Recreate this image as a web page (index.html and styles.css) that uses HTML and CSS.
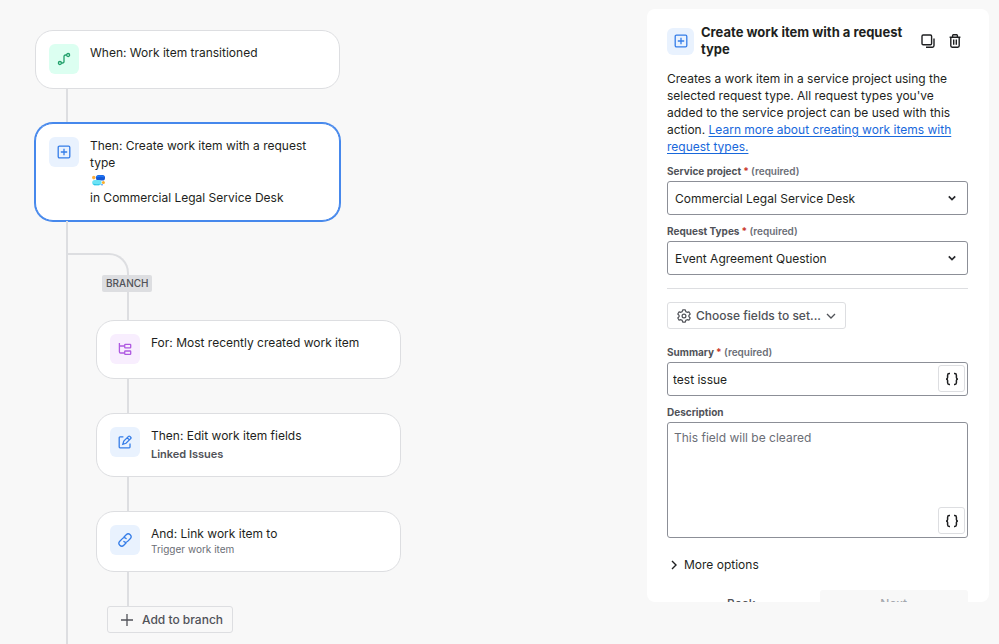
FILE: index.html
```html
<!DOCTYPE html>
<html lang="en">
<head>
  <meta charset="UTF-8">
  <meta name="viewport" content="width=device-width, initial-scale=1">
  <title>Automation rule</title>
  <link rel="stylesheet" href="styles.css">
</head>
<body>
  <main class="builder">
    <section class="flow" aria-label="Rule flow">
      <article class="card">
        <span class="tile green">
          <svg width="14" height="14" viewBox="0 0 14 14" fill="none" stroke="currentColor" stroke-width="1.3">
            <circle cx="2.9" cy="11" r="1.5"/>
            <circle cx="11.1" cy="3" r="1.5"/>
            <path d="M4.4 11H5.5Q7 11 7 9.5V4.5Q7 3 8.5 3H9.6"/>
          </svg>
        </span>
        <div class="card-text">
          <p class="card-title">When: Work item transitioned</p>
        </div>
      </article>
      <div class="connector"></div>
      <article class="card selected">
        <span class="tile blue">
          <svg width="14" height="14" viewBox="0 0 14 14" fill="none" stroke="currentColor" stroke-width="1.3">
            <rect x="1.2" y="1.2" width="11.6" height="11.6" rx="1.2"/>
            <path d="M7 3.8V10.2M3.8 7H10.2"/>
          </svg>
        </span>
        <div class="card-text">
          <p class="card-title">Then: Create work item with a request type</p>
          <div class="project-logo">
            <svg width="16" height="12" viewBox="0 0 16 12">
              <rect x="6" y="1" width="9" height="5.6" rx="2.6" fill="#1558d6"/>
              <path d="M7 2Q10 .4 13.6 1.8L14 3.4Q10 2 6.4 3.6Z" fill="#1d7afc"/>
              <rect x="2.2" y="6" width="9.4" height="5.2" rx="2.6" fill="#6be3f5"/>
              <path d="M3 9.6Q6 11 10 9.8L9 11.2H4Z" fill="#2ec4e6"/>
              <circle cx="3.8" cy="3.6" r="1.8" fill="#fbb040"/>
              <circle cx="13.4" cy="8.4" r="1.5" fill="#f9ae2b"/>
              <circle cx="12" cy="10.8" r=".8" fill="#2f7df0"/>
            </svg>
          </div>
          <p class="card-title">in Commercial Legal Service Desk</p>
        </div>
      </article>

      <div class="trunk">
        <div class="curve"></div>
        <div class="branch">
          <span class="branch-label">BRANCH</span>
          <div class="connector short"></div>
          <article class="card">
            <span class="tile purple">
              <svg width="14" height="14" viewBox="0 0 14 14" fill="none" stroke="currentColor" stroke-width="1.3">
                <path d="M1.4 1V9.8Q1.4 11 2.6 11H6.6M1.4 4H6.6"/>
                <rect x="6.7" y="2.4" width="6" height="3.4" rx=".6"/>
                <rect x="6.7" y="9" width="6" height="3.4" rx=".6"/>
              </svg>
            </span>
            <div class="card-text">
              <p class="card-title">For: Most recently created work item</p>
            </div>
          </article>
          <div class="connector"></div>
          <article class="card">
            <span class="tile blue">
              <svg width="14" height="14" viewBox="0 0 14 14" fill="none" stroke="currentColor" stroke-width="1.3">
                <path d="M5.4 1.9H2Q1.2 1.9 1.2 2.7V12Q1.2 12.8 2 12.8H11.2Q12 12.8 12 12V8.6"/>
                <path d="M10.5 1.4Q11.2.7 11.9 1.4L12.7 2.2Q13.4 2.9 12.7 3.6L8 8.3L4.8 9.3L5.8 6.1ZM9.2 2.7L11.4 4.9"/>
              </svg>
            </span>
            <div class="card-text">
              <p class="card-title">Then: Edit work item fields</p>
              <p class="card-sub strong">Linked Issues</p>
            </div>
          </article>
          <div class="connector"></div>
          <article class="card">
            <span class="tile blue">
              <svg width="14" height="14" viewBox="0 0 14 14" fill="none" stroke="currentColor" stroke-width="1.3" stroke-linecap="round">
                <path d="M6 4L8.2 1.8A2.75 2.75 0 0 1 12.2 5.8L9.6 8.4A2.7 2.7 0 0 1 5.9 8.5"/>
                <path d="M8 10L5.8 12.2A2.75 2.75 0 0 1 1.8 8.2L4.4 5.6A2.7 2.7 0 0 1 8.1 5.5"/>
              </svg>
            </span>
            <div class="card-text">
              <p class="card-title">And: Link work item to</p>
              <p class="card-sub">Trigger work item</p>
            </div>
          </article>
          <div class="connector"></div>
          <button class="btn add" type="button">
            <svg width="14" height="14" viewBox="0 0 14 14" fill="none" stroke="currentColor" stroke-width="1.3">
              <path d="M7 1V13M1 7H13"/>
            </svg>
            Add to branch
          </button>
        </div>
      </div>
    </section>

    <aside class="panel">
      <header class="panel-header">
        <span class="tile blue small">
          <svg width="14" height="14" viewBox="0 0 14 14" fill="none" stroke="currentColor" stroke-width="1.3">
            <rect x="1.2" y="1.2" width="11.6" height="11.6" rx="1.2"/>
            <path d="M7 3.8V10.2M3.8 7H10.2"/>
          </svg>
        </span>
        <h1>Create work item with a request type</h1>
        <button class="icon-btn" type="button" aria-label="Duplicate">
          <svg width="14" height="14" viewBox="0 0 14 14" fill="none" stroke="currentColor" stroke-width="1.4">
            <rect x="1" y="1" width="9.6" height="9.8" rx="1.2"/>
            <path d="M13 4.4V11.6Q13 13.2 11.4 13.2H5"/>
          </svg>
        </button>
        <button class="icon-btn" type="button" aria-label="Delete">
          <svg width="14" height="14" viewBox="0 0 14 14" fill="none" stroke="currentColor" stroke-width="1.4">
            <path d="M1.6 3.2H12.4M4.6 3V1.6Q4.6.8 5.4.8H8.6Q9.4.8 9.4 1.6V3M2.8 3.2V11.8Q2.8 13.2 4.2 13.2H9.8Q11.2 13.2 11.2 11.8V3.2M5.7 5.4V10.8M8.3 5.4V10.8"/>
          </svg>
        </button>
      </header>
      <p class="intro">Creates a work item in a service project using the selected request type. All request types you've added to the service project can be used with this action. <a href="#">Learn more about creating work items with request types.</a></p>

      <form>
        <div class="field">
          <label for="project">Service project<span class="star">*</span> <span class="req">(required)</span></label>
          <div class="control">
            <select id="project">
              <option>Commercial Legal Service Desk</option>
            </select>
            <svg class="chevron" width="10" height="10" viewBox="0 0 10 10" fill="none" stroke="currentColor" stroke-width="1.7">
              <path d="M1.8 3.4L5 6.6L8.2 3.4"/>
            </svg>
          </div>
        </div>
        <div class="field">
          <label for="types">Request Types<span class="star">*</span> <span class="req">(required)</span></label>
          <div class="control">
            <select id="types">
              <option>Event Agreement Question</option>
            </select>
            <svg class="chevron" width="10" height="10" viewBox="0 0 10 10" fill="none" stroke="currentColor" stroke-width="1.7">
              <path d="M1.8 3.4L5 6.6L8.2 3.4"/>
            </svg>
          </div>
        </div>
        <hr>
        <button class="btn choose" type="button">
          <svg width="14" height="14" viewBox="0 0 14 14" fill="none" stroke="currentColor" stroke-width="1.2" stroke-linejoin="round">
            <path d="M5.7.8H8.3L8.8 2.6L10.1 3.3L11.9 2.8L13.2 5L11.9 6.3V7.7L13.2 9L11.9 11.2L10.1 10.7L8.8 11.4L8.3 13.2H5.7L5.2 11.4L3.9 10.7L2.1 11.2L.8 9L2.1 7.7V6.3L.8 5L2.1 2.8L3.9 3.3L5.2 2.6Z"/>
            <circle cx="7" cy="7" r="1.9"/>
          </svg>
          Choose fields to set...
          <svg width="10" height="10" viewBox="0 0 10 10" fill="none" stroke="currentColor" stroke-width="1.3">
            <path d="M1 3L5 7L9 3"/>
          </svg>
        </button>
        <div class="field">
          <label for="summary">Summary<span class="star">*</span> <span class="req">(required)</span></label>
          <div class="control">
            <input id="summary" type="text" value="test issue">
            <button class="smart" type="button" aria-label="Insert smart value">
              <svg width="16" height="14" viewBox="0 0 16 14" fill="none" stroke="currentColor" stroke-width="1.5">
                <path d="M6 1.6H5.2Q3.6 1.6 3.6 3.2V5.4Q3.6 7 2 7Q3.6 7 3.6 8.6V10.8Q3.6 12.4 5.2 12.4H6M10 1.6H10.8Q12.4 1.6 12.4 3.2V5.4Q12.4 7 14 7Q12.4 7 12.4 8.6V10.8Q12.4 12.4 10.8 12.4H10"/>
              </svg>
            </button>
          </div>
        </div>
        <div class="field">
          <label for="description">Description</label>
          <div class="control">
            <textarea id="description" placeholder="This field will be cleared"></textarea>
            <button class="smart" type="button" aria-label="Insert smart value">
              <svg width="16" height="14" viewBox="0 0 16 14" fill="none" stroke="currentColor" stroke-width="1.5">
                <path d="M6 1.6H5.2Q3.6 1.6 3.6 3.2V5.4Q3.6 7 2 7Q3.6 7 3.6 8.6V10.8Q3.6 12.4 5.2 12.4H6M10 1.6H10.8Q12.4 1.6 12.4 3.2V5.4Q12.4 7 14 7Q12.4 7 12.4 8.6V10.8Q12.4 12.4 10.8 12.4H10"/>
              </svg>
            </button>
          </div>
        </div>
        <button class="more" type="button">
          <svg width="10" height="10" viewBox="0 0 10 10" fill="none" stroke="currentColor" stroke-width="1.4">
            <path d="M3 1L7 5L3 9"/>
          </svg>
          More options
        </button>
        <div class="actions">
          <button class="back" type="button">Back</button>
          <button class="next" type="submit" disabled>Next</button>
        </div>
      </form>
    </aside>
  </main>
</body>
</html>
```

FILE: styles.css
```css
* {
  box-sizing: border-box;
}
body {
  margin: 0;
  font-family: Inter, "Liberation Sans", sans-serif;
  font-size: 12px;
  line-height: 17px;
  color: #1e1f21;
  background: #f8f8f8;
}
p, h1 {
  margin: 0;
}
svg {
  display: block;
  flex: none;
}
button, input, select, textarea {
  font: inherit;
  color: inherit;
}
button {
  cursor: pointer;
}
.builder {
  display: flex;
  height: 100vh;
  overflow: hidden;
}

/* rule flow */
.flow {
  flex: 1;
  display: flex;
  flex-direction: column;
  padding: 30px 0 0 35px;
}
.card {
  display: flex;
  gap: 11px;
  width: 305px;
  padding: 13px 13px 14px;
  background: #fff;
  border: 1px solid #dddee1;
  border-radius: 18px;
}
.card.selected {
  border-color: #4688ec;
  box-shadow: 0 0 0 1px #4688ec;
}
.card-text {
  flex: 1;
}
.tile {
  display: flex;
  flex: none;
  align-items: center;
  justify-content: center;
  width: 30px;
  height: 30px;
  border-radius: 6px;
}
.tile.small {
  width: 27px;
  height: 27px;
}
.green {
  color: #22a06b;
  background: #dcfff1;
}
.blue {
  color: #357de8;
  background: #e9f2fe;
}
.purple {
  color: #af59e1;
  background: #f8eefe;
}
.project-logo {
  display: flex;
  align-items: center;
  height: 18px;
}
.card-sub {
  font-size: 10px;
  line-height: 15px;
  color: #6b6e76;
}
.card-sub.strong {
  margin-top: 3px;
  font-size: 11px;
  font-weight: 600;
  color: #505258;
}
.connector {
  width: 2px;
  height: 34px;
  margin-left: 31px;
  background: #dddee1;
}
.connector.short {
  height: 28px;
}
.trunk {
  flex: 1;
  margin-left: 31px;
  padding-top: 32px;
  border-left: 2px solid #dddee1;
}
.curve {
  width: 61px;
  height: 22px;
  border: solid #dddee1;
  border-width: 2px 2px 0 0;
  border-top-right-radius: 20px;
}
.branch {
  display: flex;
  flex-direction: column;
  align-items: flex-start;
  padding-left: 28px;
}
.branch-label {
  margin-left: 6px;
  padding: 1px 4px;
  font-size: 10px;
  line-height: 15px;
  font-weight: 500;
  color: #505258;
  background: #dddee1;
  border-radius: 2px;
}
.btn {
  display: flex;
  align-items: center;
  height: 27px;
  padding: 0 9px;
  font-weight: 500;
  color: #505258;
  background: transparent;
  border: 1px solid #dddee1;
  border-radius: 3px;
}
.btn.add {
  gap: 8px;
  margin-left: 11px;
  padding: 0 9px 0 12px;
}
.btn.choose {
  gap: 5px;
}

/* settings panel */
.panel {
  flex: 0 0 342px;
  margin: 9px 10px 42px 0;
  padding: 15px 21px 0 20px;
  overflow: hidden;
  background: #fff;
  border-radius: 8px;
}
.panel-header {
  display: flex;
  align-items: center;
  margin-bottom: 12px;
}
.panel-header h1 {
  flex: 1;
  margin-left: 7px;
  font-size: 13px;
  line-height: 17px;
  font-weight: 700;
}
.icon-btn {
  display: flex;
  align-items: center;
  justify-content: center;
  width: 27px;
  height: 27px;
  padding: 0;
  background: none;
  border: 0;
}
a {
  color: #1868db;
  text-underline-offset: 2px;
}
.field {
  margin-top: 9px;
}
label {
  display: block;
  margin-bottom: 2px;
  font-size: 10px;
  line-height: 15px;
  font-weight: 700;
  color: #505258;
}
.star {
  padding-left: 2px;
  color: #c9372c;
}
.req {
  font-weight: 600;
  color: #6b6e76;
}
.control {
  position: relative;
}
select, input, textarea {
  display: block;
  width: 100%;
  height: 34px;
  padding: 0 7px;
  background: #fff;
  border: 1px solid #8c8f97;
  border-radius: 3px;
}
select {
  appearance: none;
}
input {
  padding: 0 5px;
}
textarea {
  height: 116px;
  padding: 6px;
  resize: none;
}
textarea::placeholder {
  color: #6b6e76;
}
.chevron {
  position: absolute;
  top: 12px;
  right: 11px;
  color: #292a2e;
  pointer-events: none;
}
.smart {
  position: absolute;
  right: 3px;
  bottom: 4px;
  display: flex;
  align-items: center;
  justify-content: center;
  width: 27px;
  height: 27px;
  padding: 0;
  background: #fff;
  border: 1px solid #dddee1;
  border-radius: 3px;
}
hr {
  margin: 13px 0;
  border: 0;
  border-top: 1px solid #dddee1;
}
.btn.choose {
  margin-bottom: 16px;
}
.more {
  display: flex;
  align-items: center;
  gap: 5px;
  margin: 18px 0 17px;
  padding: 0 2px;
  background: none;
  border: 0;
}
.actions {
  display: grid;
  grid-template-columns: 1fr 1fr;
  gap: 4px;
}
.actions button {
  height: 27px;
  font-weight: 500;
  color: #505258;
  background: none;
  border: 0;
  border-radius: 3px;
}
.actions .next {
  color: #a5a8ae;
  background: #f8f8f8;
}
```
